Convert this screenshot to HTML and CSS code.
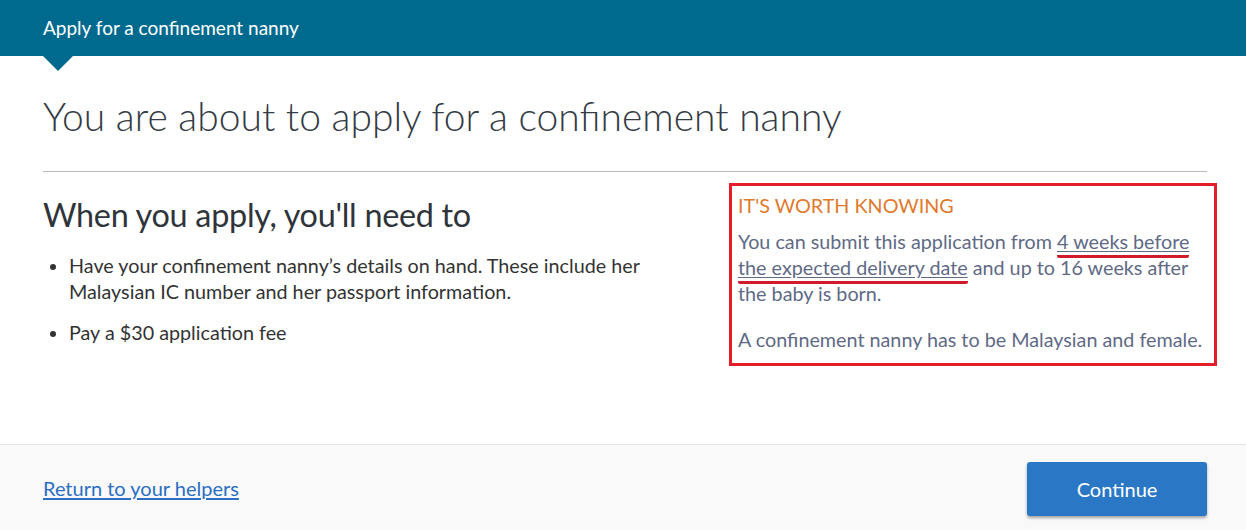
FILE: index.html
```html
<!DOCTYPE html>
<html>
<head>
<meta charset="utf-8">
<link rel="stylesheet" href="styles.css">
</head>
<body>
<header class="topbar">
  <div class="topbar-title">Apply for a confinement nanny</div>
  <span class="topbar-pointer"></span>
</header>
<main class="content">
  <h1 class="page-title">You are about to apply for a confinement nanny</h1>
  <hr class="divider">
  <div class="columns">
    <section class="needs">
      <h2 class="needs-title">When you apply, you'll need to</h2>
      <ul class="needs-list">
        <li>Have your confinement nanny’s details on hand. These include her Malaysian IC number and her passport information.</li>
        <li>Pay a $30 application fee</li>
      </ul>
    </section>
    <aside class="worth">
      <h3 class="worth-title">IT'S WORTH KNOWING</h3>
      <p class="worth-text">You can submit this application from <span class="mark">4 weeks before</span> <span class="mark">the expected delivery date</span> and up to 16 weeks after the baby is born.</p>
      <p class="worth-text">A confinement nanny has to be Malaysian and female.</p>
    </aside>
  </div>
</main>
<footer class="footer">
  <a class="back-link" href="#">Return to your helpers</a>
  <button class="continue-btn">Continue</button>
</footer>
</body>
</html>
```
FILE: styles.css
```css
html, body {
  margin: 0;
  padding: 0;
  background: #fff;
  font-family: Lato, "Open Sans", Arial, sans-serif;
  height: 530px;
  overflow: hidden;
}
body {
  display: flex;
  flex-direction: column;
}
.topbar {
  position: relative;
  height: 56px;
  background: #006a8e;
  display: flex;
  align-items: center;
  padding: 0 43px;
  flex: none;
}
.topbar-title {
  color: #fff;
  font-size: 19px;
  font-weight: 400;
  margin-top: -1px;
}
.topbar-pointer {
  position: absolute;
  left: 43px;
  top: 56px;
  width: 0;
  height: 0;
  border-left: 15px solid transparent;
  border-right: 15px solid transparent;
  border-top: 15px solid #006a8e;
}
.content {
  padding: 0 39px 0 43px;
  flex: 1;
}
.page-title {
  margin: 0;
  padding-top: 35px;
  font-size: 39px;
  font-weight: 300;
  color: #333b44;
  line-height: 50px;
}
.divider {
  border: 0;
  border-top: 1px solid #bbbbbb;
  margin: 30px 0 0 0;
}
.columns {
  display: flex;
  justify-content: space-between;
  align-items: flex-start;
  padding-top: 10px;
}
.needs {
  width: 640px;
}
.needs-title {
  margin: 13px 0 0 0;
  font-size: 32.4px;
  font-weight: 400;
  color: #2f343a;
  line-height: 40px;
  letter-spacing: -0.3px;
}
.needs-list {
  margin: 18px 0 0 0;
  padding-left: 26px;
  font-size: 19.75px;
  color: #333;
  line-height: 26px;
}
.needs-list li {
  margin-bottom: 15px;
}
.worth {
  width: 470px;
  margin: 1px -10px 0 0;
  border: 3px solid #e31e2a;
  padding: 6px 6px 10px 6px;
}
.worth-title {
  margin: 0;
  font-size: 19.75px;
  font-weight: 400;
  color: #e07a2b;
  line-height: 28px;
}
.worth-text {
  margin: 9px 0 0 0;
  font-size: 19.75px;
  color: #5f6a86;
  line-height: 26px;
}
.worth-text + .worth-text {
  margin-top: 20px;
}
.mark {
  text-decoration: underline;
  text-decoration-color: #5f6a86;
  text-underline-offset: 2px;
  border-bottom: 3px solid #d11a2a;
  border-radius: 2px;
  padding-bottom: 2px;
}
.footer {
  flex: none;
  height: 85px;
  border-top: 1px solid #e3e3e3;
  background: #f9f9f9;
  display: flex;
  align-items: center;
  justify-content: space-between;
  padding: 0 39px 0 43px;
}
.back-link {
  color: #2b6ec2;
  font-size: 20px;
  text-decoration: underline;
  text-underline-offset: 2px;
}
.continue-btn {
  width: 180px;
  height: 54px;
  margin-top: 2px;
  background: #2a78c5;
  color: #fff;
  border: 0;
  border-radius: 3px;
  font-family: Lato, "Open Sans", Arial, sans-serif;
  font-size: 20px;
  box-shadow: 0 2px 3px rgba(0,0,0,0.35);
}
```
